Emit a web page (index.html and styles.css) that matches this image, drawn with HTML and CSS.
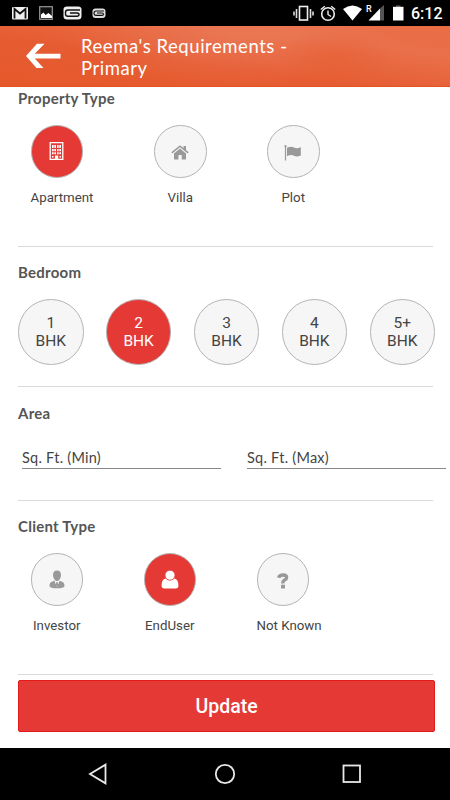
FILE: index.html
```html
<!DOCTYPE html>
<html lang="en">
<head>
    <meta charset="UTF-8">
    <meta name="viewport" content="width=device-width, initial-scale=1.0">
    <title>Requirements</title>
    <link rel="stylesheet" href="styles.css">
</head>
<body>
    <!-- Status bar -->
    <div class="status-bar">
        <svg width="450" height="26" viewBox="0 0 450 26">
            <rect x="12" y="7" width="16" height="12.500" rx="1" fill="#eee"/>
            <path d="M14.500 18.500V9l5.500 4.500L25.500 9v9.500" fill="none" stroke="#111" stroke-width="1.800"/>
            <rect x="39.700" y="6.700" width="12.600" height="12.600" fill="#111" stroke="#999" stroke-width="1.200"/>
            <path d="M41 18v-3.500l2.500-2 2 2.500 3-2 3.500 3v2z" fill="#fff"/>
            <path d="M67 6.500h11q3.500 0 3.500 3v6.500q0 3.500-3.500 3.500H67q-3.500 0-3.500-3.500V9.500q0-3 3.500-3z" fill="#eee"/>
            <path d="M80 10H68q-2.500 0-2.500 2.500v1.500q0 2.200 2.500 2.200h9q2 0 2-1.600t-2-1.600h-7" fill="none" stroke="#111" stroke-width="1.400"/>
            <rect x="92.500" y="8.500" width="13" height="9.500" rx="3" fill="#ddd"/>
            <path d="M104 11h-8q-2 0-2 2.200t2 2.200h6q1.500 0 1.500-1.200t-1.500-1.200h-5" fill="none" stroke="#111" stroke-width="1.100"/>
            <!-- vibrate -->
            <rect x="299.500" y="6.500" width="8" height="13.500" fill="none" stroke="#eee" stroke-width="1.600"/>
            <path d="M296.500 9v9M294 11.500v4M310.500 9v9M313 11.500v4" stroke="#ddd" stroke-width="1.600"/>
            <!-- alarm -->
            <circle cx="328" cy="14" r="6.300" fill="none" stroke="#eee" stroke-width="1.600"/>
            <path d="M328 10.500V14.500l3 2M320.800 9.500l4-3.300M335.200 9.500l-4-3.300" fill="none" stroke="#eee" stroke-width="1.400"/>
            <path d="M343 9q9.500-7 19 0l-9.500 11.500z" fill="#fff"/>
            <path d="M368.500 20.500l11.500-12v12z" fill="#fff"/>
            <path d="M380 8.500l4-3.500v15.500h-4z" fill="#555"/>
            <path d="M396 5.500h4.500v1.300H396z" fill="#666"/>
            <path d="M393 6.800h10.500V20.500H393z" fill="#fff"/>
        </svg>
        <span class="roaming">R</span>
        <span class="clock">6:12</span>
    </div>

    <!-- Toolbar -->
    <div class="toolbar">
        <svg class="back" width="35" height="26" viewBox="0 0 35 26">
            <path d="M0 13L11 .8h7.500L8.800 10.700H34.500v4.800H8.800L17.500 25H10.500z" fill="#fff"/>
        </svg>
        <h1 class="title">Reema's Requirements -<br>Primary</h1>
    </div>

    <div class="content">
        <div class="section property">
            <h2>Property Type</h2>
            <div class="choices">
                <div class="choice">
                    <div class="circle selected">
                        <svg width="15" height="18" viewBox="0 0 15 18">
                            <path d="M1.200.7h12.600v16.600H1.200z" fill="none" stroke="#fff" stroke-width="1.300"/>
                            <path d="M3 3h4v3H3zM8 3h4v3H8zM3 7h4v2.300H3zM8 7h4v2.300H8zM3 10.300h4v2H3zM8 10.300h4v2H8zM3 14h1.600v1.500H3zM10.500 14h1.600v1.500h-1.600zM6 13.500h3.200V17H6z" fill="#fff"/>
                            <path d="M5 3v9.500M10 3v9.500" stroke="#e53935" stroke-width=".7"/>
                        </svg>
                    </div>
                    <span class="label">Apartment</span>
                </div>
                <div class="choice">
                    <div class="circle">
                        <svg class="house" width="18" height="15" viewBox="0 0 18 15">
                            <path d="M9 3.500l6 5V14.500h-4.300V10H7.500v4.500H3V8.500z" fill="#999"/>
                            <path d="M.8 7.800L9 1.200l8.200 6.600" fill="none" stroke="#999" stroke-width="1.600"/>
                            <path d="M12.500 1h2.500v5l-2.500-2z" fill="#999"/>
                        </svg>
                    </div>
                    <span class="label">Villa</span>
                </div>
                <div class="choice">
                    <div class="circle">
                        <svg class="flag" width="18" height="16" viewBox="0 0 18 16">
                            <path d="M1.500 1v14.500" stroke="#999" stroke-width="1.200"/>
                            <circle cx="1.500" cy="1.200" r="1.100" fill="#999"/>
                            <path d="M3 2.800q4-2 7-.2t6.800-.6v8.500q-3.800 2-6.800.3T3 11.200z" fill="#999"/>
                        </svg>
                    </div>
                    <span class="label">Plot</span>
                </div>
            </div>
        </div>

        <div class="section bedroom">
            <h2>Bedroom</h2>
            <div class="sizes">
                <div class="circle big">1<br>BHK</div>
                <div class="circle big selected">2<br>BHK</div>
                <div class="circle big">3<br>BHK</div>
                <div class="circle big">4<br>BHK</div>
                <div class="circle big">5+<br>BHK</div>
            </div>
        </div>

        <div class="section area">
            <h2>Area</h2>
            <div class="fields">
                <div class="field">Sq. Ft. (Min)</div>
                <div class="field">Sq. Ft. (Max)</div>
            </div>
        </div>

        <div class="section client">
            <h2>Client Type</h2>
            <div class="choices">
                <div class="choice">
                    <div class="circle">
                        <svg width="16" height="19" viewBox="0 0 16 19">
                            <path d="M5.500 10.500L8 17l2.500-6.500c2.600 1.400 5 1.500 5 5.500 0 1.500-3.500 2.300-7.500 2.300S.5 17.500.5 16c0-4 2.400-4.100 5-5.500z" fill="#999"/>
                            <path d="M5.500 10.500h5L8 17z" fill="#f6f6f6"/>
                            <path d="M8 .5c2.500 0 4 1.600 4 4.200 0 3-1.700 6.300-4 6.300S4 7.700 4 4.700C4 2.100 5.500.5 8 .5z" fill="#999"/>
                            <path d="M7.300 12h1.400l.4 3L8 17.500 6.900 15z" fill="#999"/>
                        </svg>
                    </div>
                    <span class="label">Investor</span>
                </div>
                <div class="choice">
                    <div class="circle selected">
                        <svg width="18" height="19" viewBox="0 0 18 19">
                            <path d="M4.500 8.500Q.6 9.500.6 15.500q0 3 2.500 3h11.800q2.500 0 2.500-3 0-6-3.900-7-4.500 3.500-9 0z" fill="#fff"/>
                            <circle cx="9" cy="5.200" r="5" fill="#fff" stroke="#e53935" stroke-width=".8"/>
                        </svg>
                    </div>
                    <span class="label">EndUser</span>
                </div>
                <div class="choice">
                    <div class="circle">
                        <svg class="question" width="12" height="16" viewBox="0 0 12 16">
                            <path d="M1.500 4.800Q2.500 2 6 2t3.600 2.400q0 1.600-2 2.600T6 10.500" fill="none" stroke="#999" stroke-width="3.400"/>
                            <path d="M4 11.700h4v3.800H4z" fill="#999"/>
                        </svg>
                    </div>
                    <span class="label">Not Known</span>
                </div>
            </div>
        </div>

        <button class="update">Update</button>
    </div>

    <!-- Navigation bar -->
    <div class="nav-bar">
        <svg width="20" height="22" viewBox="0 0 20 22"><path d="M17.500 1.700v18.600L2 11z"/></svg>
        <svg width="22" height="22" viewBox="0 0 22 22"><circle cx="11" cy="11" r="9.200"/></svg>
        <svg width="20" height="20" viewBox="0 0 20 20"><rect x="1.500" y="1.500" width="16.500" height="16.500"/></svg>
    </div>
</body>
</html>
```

FILE: styles.css
```css
* {
    box-sizing: border-box;
}
body {
    margin: 0;
    width: 450px;
    height: 800px;
    overflow: hidden;
    display: flex;
    flex-direction: column;
    background: #fff;
    font-family: Roboto, sans-serif;
    color: #444;
}
svg {
    display: block;
    flex: none;
}
.status-bar {
    position: relative;
    height: 26px;
    background: #000;
    color: #fff;
}
.clock {
    position: absolute;
    left: 411px;
    top: 4px;
    font-size: 16px;
    line-height: 20px;
    font-weight: 500;
}
.roaming {
    position: absolute;
    left: 366px;
    top: 4px;
    font-size: 9px;
    line-height: 10px;
    font-weight: 500;
}
.toolbar {
    height: 61px;
    display: flex;
    padding: 9px 0 0 26px;
    background:
        radial-gradient(ellipse 60px 26px at 335px 30px, rgba(229, 85, 40, 0.4), rgba(229, 85, 40, 0)),
        radial-gradient(ellipse 170px 55px at 235px 8px, rgba(236, 130, 100, 0.45), rgba(236, 130, 100, 0)),
        linear-gradient(8deg, #e5582b 0%, #e65c32 40%, #e9704a 75%, #e96c44 100%);
    border-bottom: 1px solid #e2531e;
}
.back {
    margin-top: 8px;
}
.title {
    margin: 0 0 0 20px;
    font-family: Lato, sans-serif;
    font-size: 18.5px;
    line-height: 22px;
    font-weight: 400;
    letter-spacing: 0.55px;
    color: #fff;
}
.content {
    height: 661px;
    padding: 0 15px 0 18px;
}
.section {
    width: 415px;
    border-bottom: 1px solid #d9d9d9;
}
.property {
    height: 160px;
    padding-top: 1px;
}
.bedroom {
    height: 140px;
    padding-top: 15px;
}
.area {
    height: 114px;
    padding-top: 16px;
}
.client {
    height: 174px;
    padding-top: 15px;
}
h2 {
    margin: 0;
    font-family: Lato, sans-serif;
    font-size: 15px;
    line-height: 20px;
    font-weight: 700;
    letter-spacing: 0.25px;
    color: #555;
}
.choices {
    display: grid;
    grid-template-columns: 113px 113px 53px;
    padding: 17px 0 0 12.5px;
}
.property .choices {
    grid-template-columns: 123.5px 113px 53px;
}
.choice {
    width: 52.5px;
    text-align: center;
}
.circle {
    width: 52.5px;
    height: 52.5px;
    border: 1px solid #b4b4b4;
    border-radius: 50%;
    background: #f6f6f6;
    display: flex;
    justify-content: center;
    align-items: center;
}
.selected {
    background: #e53935;
    color: #fff;
}
.house, .flag, .question {
    margin-top: 3px;
}
.label {
    display: block;
    margin-top: 11px;
    font-size: 13.3px;
    line-height: 18px;
    white-space: nowrap;
}
.sizes {
    width: 417px;
    display: flex;
    justify-content: space-between;
    padding-top: 17px;
}
.big {
    width: 65.5px;
    height: 65.5px;
    padding-top: 1px;
    font-size: 15.5px;
    line-height: 18px;
    text-align: center;
}
.fields {
    display: flex;
    gap: 26px;
    padding: 25px 0 0 4px;
}
.field {
    flex: none;
    width: 199px;
    height: 21px;
    border-bottom: 1px solid #888;
    font-family: Lato, sans-serif;
    font-size: 14.5px;
    line-height: 19px;
    letter-spacing: 0.25px;
}
.update {
    display: block;
    width: 417px;
    height: 52px;
    margin-top: 5px;
    padding: 0;
    border: 1px solid #e21b1b;
    border-radius: 2px;
    background: #e53935;
    color: #fff;
    font-family: Roboto, sans-serif;
    font-size: 19.5px;
    font-weight: 500;
}
.nav-bar {
    height: 52px;
    background: #000;
    display: flex;
    justify-content: space-between;
    align-items: center;
    padding: 0 88px;
}
.nav-bar svg {
    fill: none;
    stroke: #e8e8e8;
    stroke-width: 1.8;
}
```
